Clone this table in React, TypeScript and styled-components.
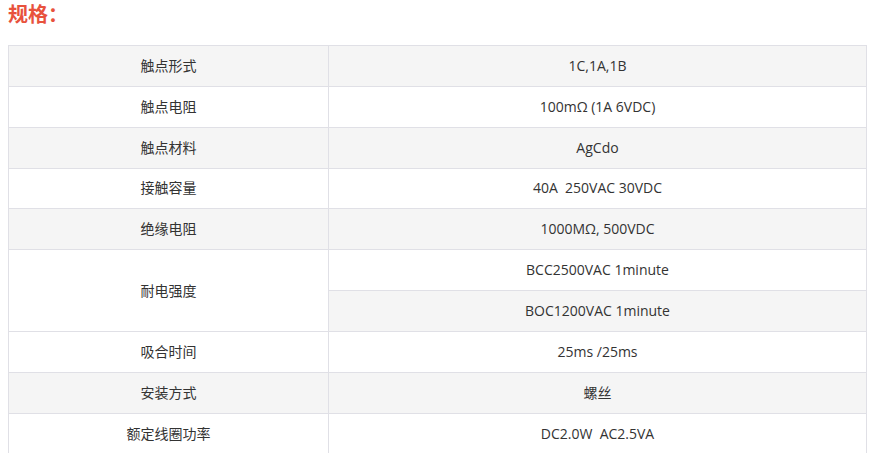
import React from "react";
import styled, { createGlobalStyle } from "styled-components";

const Global = createGlobalStyle`
  html, body { margin: 0; padding: 0; background: #fff; }
  body { font-family: "Open Sans", "Noto Sans CJK SC", sans-serif; }
`;

const Page = styled.div`
  padding: 0 3px 0 8px;
`;

const Title = styled.h3`
  margin: 0 0 17px;
  font-family: "Noto Sans CJK SC", sans-serif;
  font-size: 20px;
  line-height: 28px;
  font-weight: 700;
  color: #e8523d;
`;

const Table = styled.table`
  width: 859px;
  border-collapse: collapse;
  table-layout: fixed;
  font-size: 14px;
  color: #333;
  tbody tr:nth-child(odd) { background: #f5f5f5; }
  tbody tr:nth-child(even) { background: #fff; }
`;

const Cell = styled.td<{ $w?: number }>`
  border: 1px solid #e0e0e6;
  height: 39.85px;
  padding: 0;
  line-height: 20px;
  text-align: center;
  vertical-align: middle;
  ${(p) => (p.$w ? `width: ${p.$w}px;` : "")}
`;

const Lead = styled(Cell)`
  background: #fff;
`;

const rows: [string, string][] = [
  ["触点形式", "1C,1A,1B"],
  ["触点电阻", "100mΩ (1A 6VDC)"],
  ["触点材料", "AgCdo"],
  ["接触容量", "40A\u00a0 250VAC 30VDC"],
  ["绝缘电阻", "1000MΩ, 500VDC"],
];
const rows2: [string, string][] = [
  ["吸合时间", "25ms /25ms"],
  ["安装方式", "螺丝"],
  ["额定线圈功率", "DC2.0W\u00a0 AC2.5VA"],
];

export default function App() {
  return (
    <>
      <Global />
      <Page>
        <Title>规格：</Title>
        <Table>
          <tbody>
            {rows.map(([k, v], i) => (
              <tr key={k}>
                <Cell $w={i === 0 ? 319 : undefined}>{k}</Cell>
                <Cell>{v}</Cell>
              </tr>
            ))}
            <tr>
              <Lead rowSpan={2}>耐电强度</Lead>
              <Cell>BCC2500VAC 1minute</Cell>
            </tr>
            <tr>
              <Cell>BOC1200VAC 1minute</Cell>
            </tr>
            {rows2.map(([k, v]) => (
              <tr key={k}>
                <Cell>{k}</Cell>
                <Cell>{v}</Cell>
              </tr>
            ))}
          </tbody>
        </Table>
      </Page>
    </>
  );
}
